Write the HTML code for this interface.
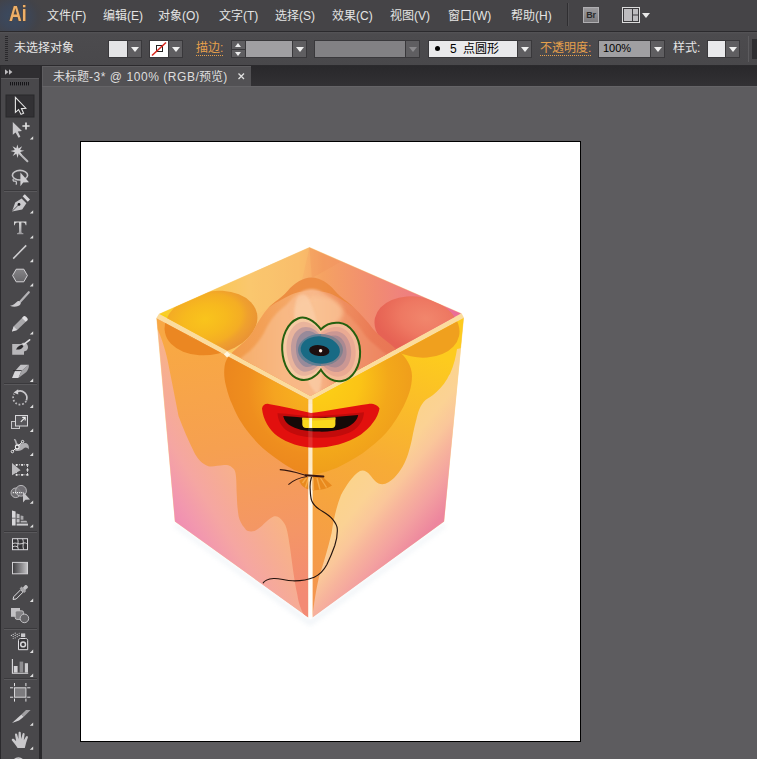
<!DOCTYPE html>
<html lang="zh-CN">
<head>
<meta charset="utf-8">
<title>未标题-3* @ 100% (RGB/预览)</title>
<style>
*{box-sizing:border-box;margin:0;padding:0}
html,body{width:757px;height:759px;overflow:hidden;background:#5d5c5f}
body{position:relative;font-family:"Liberation Sans",sans-serif;font-size:12px;color:#e2e2e2}
.abs{position:absolute}
/* menu bar */
#menubar{position:absolute;left:0;top:0;width:757px;height:31px;background:#454447}
#menubar .mi{position:absolute;top:8px;height:16px;line-height:16px;font-size:12px;color:#e4e4e4;white-space:nowrap;letter-spacing:0}
#ailogo{position:absolute;left:0;top:0;width:48px;height:31px;background:radial-gradient(ellipse 30px 26px at 14px 17px,#3a4b62 0%,#3d4657 45%,#424349 80%,#454447 100%)}
#ailogo span{position:absolute;left:8.5px;top:0.5px;font-size:22px;line-height:26px;font-weight:bold;color:#eeaf68;transform:scaleX(0.8);transform-origin:0 0;text-shadow:0 0 2px #6b4216}
/* control bar */
#ctrlbar{position:absolute;left:0;top:31px;width:757px;height:35px;background:linear-gradient(#555457 0,#4c4b4e 2px,#49484b 100%);border-top:1px solid #2b2a2d;border-bottom:1px solid #2b2a2d}
#ctrlbar .lbl{position:absolute;top:8px;height:16px;line-height:16px;font-size:12px;white-space:nowrap}
.or{color:#e6a04c;border-bottom:1px dotted #e6a04c}
.dd{position:absolute;top:8px;height:18px;width:15px;background:#5f5e61;border:1px solid #39383b}
.dd:after{content:"";position:absolute;left:3px;top:6px;border-left:4px solid transparent;border-right:4px solid transparent;border-top:5px solid #f0f0f0}
.dd.dis:after{border-top-color:#8a898c}
.fld{position:absolute;top:8px;height:18px;border:1px solid #39383b}
.spin{position:absolute;top:8px;width:15px;height:18px;background:#39383b}
.spin i{position:absolute;left:1px;width:13px;height:7.5px;background:#5f5e61}
.spin i.u{top:1px}.spin i.d{top:9.5px}
.spin i.u:after{content:"";position:absolute;left:3px;top:2px;border-left:3.5px solid transparent;border-right:3.5px solid transparent;border-bottom:4px solid #eee}
.spin i.d:after{content:"";position:absolute;left:3px;top:2px;border-left:3.5px solid transparent;border-right:3.5px solid transparent;border-top:4px solid #eee}
#cgrip{position:absolute;left:5px;top:4px;width:3px;height:25px;background:repeating-linear-gradient(to bottom,#2a292c 0,#2a292c 1px,transparent 1px,transparent 2px)}
/* tab bar */
#tabbar{position:absolute;left:42px;top:66px;width:715px;height:20px;background:linear-gradient(#29282b,#323134)}
#tab{position:absolute;left:0;top:0;width:209px;height:20px;background:#525154;border-top:1px solid #5e5d60;border-left:1px solid #5e5d60}
#tab b{font-weight:normal;letter-spacing:0.55px}
#tab span{position:absolute;left:10px;top:2px;line-height:16px;font-size:12px;color:#dedede;white-space:nowrap}
/* toolbar */
#toolbar{position:absolute;left:0;top:66px;width:42px;height:693px;background:#2a292c}
#tbhead{position:absolute;left:1px;top:0;width:39px;height:12px;background:#2f2e31}
#tbbody{position:absolute;left:1px;top:12px;width:38px;height:681px;background:#49484b;border-top:1px solid #5a595c}
/* canvas */
#canvas{position:absolute;left:42px;top:86px;width:715px;height:673px;background:#5d5c5f;border-top:1px solid #656467}
#artboard{position:absolute;left:80px;top:141px;width:501px;height:601px;background:#fff;border:1px solid #000}
</style>
</head>
<body>
<div id="canvas"></div>
<div id="artboard"></div>
<!--CUBE-->
<svg id="cube" class="abs" style="left:81px;top:142px" width="499" height="599" viewBox="81 142 499 599">
<defs>
<clipPath id="cT"><path d="M309.5 247.5L461 313.5L310.5 396L159.500 314Z"/></clipPath>
<clipPath id="cL"><path d="M156.800 318.500L308.300 399.500V617.500L175 521.500Z"/></clipPath>
<clipPath id="cR"><path d="M312.500 399.500L463.600 318L444 521.500L312.500 617.500Z"/></clipPath>
<linearGradient id="gTop" gradientUnits="userSpaceOnUse" x1="160" y1="314" x2="461" y2="314">
<stop offset="0" stop-color="#f8d008"/><stop offset="0.08" stop-color="#f9c834"/><stop offset="0.3" stop-color="#fac46e"/><stop offset="0.46" stop-color="#f9b86a"/><stop offset="0.54" stop-color="#f5a262"/><stop offset="0.72" stop-color="#f18b72"/><stop offset="0.88" stop-color="#ee7a86"/><stop offset="1" stop-color="#ea6a9a"/></linearGradient>
<linearGradient id="gLb" gradientUnits="userSpaceOnUse" x1="320" y1="440" x2="160" y2="540">
<stop offset="0.4" stop-color="#f8b486"/><stop offset="0.55" stop-color="#f6ac94"/><stop offset="0.68" stop-color="#f5a6a2"/><stop offset="0.8" stop-color="#f298ae"/><stop offset="0.94" stop-color="#ee86b6"/></linearGradient>
<linearGradient id="gLd" gradientUnits="userSpaceOnUse" x1="230" y1="340" x2="270" y2="600">
<stop offset="0" stop-color="#f8a844"/><stop offset="0.4" stop-color="#f6a050"/><stop offset="0.75" stop-color="#f49666"/><stop offset="1" stop-color="#f38a74"/></linearGradient>
<linearGradient id="gRb" gradientUnits="userSpaceOnUse" x1="345" y1="410" x2="455" y2="500">
<stop offset="0.3" stop-color="#fbd48a"/><stop offset="0.5" stop-color="#fbd294"/><stop offset="0.62" stop-color="#fac69a"/><stop offset="0.72" stop-color="#f7b49c"/><stop offset="0.85" stop-color="#f3a0a0"/><stop offset="1" stop-color="#ed869e"/></linearGradient>
<linearGradient id="gRd" gradientUnits="userSpaceOnUse" x1="420" y1="350" x2="330" y2="600">
<stop offset="0" stop-color="#fdcb1e"/><stop offset="0.45" stop-color="#f7ac36"/><stop offset="1" stop-color="#f4964e"/></linearGradient>
<linearGradient id="gHeadT" gradientUnits="userSpaceOnUse" x1="225" y1="0" x2="410" y2="0">
<stop offset="0" stop-color="#f19a46"/><stop offset="0.2" stop-color="#f3a056"/><stop offset="0.38" stop-color="#f5aa6c"/><stop offset="0.5" stop-color="#f5a872"/><stop offset="0.62" stop-color="#ef9060"/><stop offset="0.8" stop-color="#ea7a56"/><stop offset="1" stop-color="#e87254"/></linearGradient>
<linearGradient id="gHead2" gradientUnits="userSpaceOnUse" x1="236" y1="0" x2="396" y2="0">
<stop offset="0" stop-color="#f6ae6a"/><stop offset="0.3" stop-color="#f8b884"/><stop offset="0.5" stop-color="#f8b88a"/><stop offset="0.68" stop-color="#f1966a"/><stop offset="1" stop-color="#ec8060"/></linearGradient>
<filter id="blur2" x="-20%" y="-20%" width="140%" height="140%"><feGaussianBlur stdDeviation="2.2"/></filter>
<radialGradient id="gFL" gradientUnits="userSpaceOnUse" cx="314" cy="388" r="100">
<stop offset="0" stop-color="#f9b61e"/><stop offset="0.4" stop-color="#f5a420"/><stop offset="0.66" stop-color="#ef8e1e"/><stop offset="1" stop-color="#ea841e"/></radialGradient>
<radialGradient id="gFR" gradientUnits="userSpaceOnUse" cx="318" cy="380" r="104">
<stop offset="0" stop-color="#fdd216"/><stop offset="0.4" stop-color="#fbc416"/><stop offset="0.68" stop-color="#f3a81a"/><stop offset="1" stop-color="#ee9a1c"/></radialGradient>
<radialGradient id="gEarLT" gradientUnits="userSpaceOnUse" cx="206" cy="318" r="54" gradientTransform="translate(0 105) scale(1 .67)">
<stop offset="0" stop-color="#f9c41c"/><stop offset="0.4" stop-color="#f7b91e"/><stop offset="0.68" stop-color="#f4ad24"/><stop offset="0.8" stop-color="#efa02e"/><stop offset="1" stop-color="#ea9434"/></radialGradient>
<radialGradient id="gEarRT" gradientUnits="userSpaceOnUse" cx="424" cy="316" r="52" gradientTransform="translate(0 105) scale(1 .67)">
<stop offset="0" stop-color="#f1866c"/><stop offset="0.5" stop-color="#ee7862"/><stop offset="0.8" stop-color="#e96a58"/><stop offset="1" stop-color="#e66254"/></radialGradient>
<path id="balloon" d="M311.500 277.500C303 277.500 294.500 283 287.600 291C281.500 298 274.500 301.500 268.500 307.600C262.500 314.500 258 322 254.300 329C250.500 336 245.500 341 240 345.600C233 351.500 226 357 224.600 366C223.600 374 224.500 380 226 386C228 394 230 400 232 404C236 414 240 421 246.500 430C254 440 262 448 272.700 456C282 463 290 468 296 470.800C302 473.500 306 474.500 310.400 475.500C316 474.500 326 472 336.600 467.900C346 463.500 354 459 362.700 453.300C372 446 380 440 386 433C394 424 399 415 403.400 406.800C408 397 412 388 412 376C412 366 406 357 398 350.500C394 347.500 392.500 346.200 392 345.600C386.500 341 379.500 336 373 329C368 322 361 314.500 354 307.600C348 301.500 341 298 335 291C328.500 283 320 277.500 311.500 277.500Z"/>
<path id="head2" d="M311.500 289C305 289 298 293 292 299C287 305 282 308 277 313C271 319 267 326 264 333C260 340 255 346 250 351C245 355 240 358 236 363L310 406L396 363C392 358 387 355 382 351C377 346 369 341 364 334C360 327 352 319 346 313C341 308 336 305 331 299C325 293 318 289 311.500 289Z"/>
<path id="eyeO" d="M320.900 329.400C314 320 305 315.500 298 318.500C287 323 281.500 337 282.200 350C283 365 290 377 300 379.500C308 381.500 316 377 320.900 369.700C326 378 334 382.500 342 381C353 379 360.500 366 360.100 351.500C359.700 336 350 324 339 322.800C332 322 325.500 324.500 320.900 329.400Z"/>
<linearGradient id="gEdgeV" gradientUnits="userSpaceOnUse" x1="0" y1="399" x2="0" y2="618">
<stop offset="0" stop-color="#fff4dc" stop-opacity="0.55"/><stop offset="0.3" stop-color="#fff4e0" stop-opacity="0.6"/><stop offset="0.42" stop-color="#fffaf0" stop-opacity="0.95"/><stop offset="1" stop-color="#ffffff" stop-opacity="0.97"/></linearGradient>
<filter id="blur4" x="-20%" y="-20%" width="140%" height="140%"><feGaussianBlur stdDeviation="4"/></filter>
<filter id="blur3" x="-20%" y="-20%" width="140%" height="140%"><feGaussianBlur stdDeviation="2.5"/></filter>
<filter id="blur1"><feGaussianBlur stdDeviation="1.2"/></filter>
</defs>
<!-- soft shadow -->
<path d="M175 523L310 620L445 523L445 527L310 626L175 527Z" fill="#cfdbe6" opacity="0.32" filter="url(#blur3)"/>
<!-- silhouette / edge colour -->
<path d="M309.500 247L461.500 313.300L464 317.800L444.200 521.600L310.400 618.500L174.800 521.600L156.300 318.300L159 313.800Z" fill="#fbdc9e"/>
<!-- TOP FACE -->
<g clip-path="url(#cT)">
<rect x="150" y="240" width="320" height="170" fill="url(#gTop)"/>
<path d="M309.500 247.500L159.500 314L230 330L300 290Z" fill="#fbd070" opacity="0.25"/>
<path d="M309.500 247.500L312 278L340 262Z" fill="#f08a58" opacity="0.25"/>
<ellipse cx="211" cy="323" rx="47" ry="31.500" fill="url(#gEarLT)" transform="rotate(-12 211 323)"/>
<ellipse cx="417" cy="327" rx="43" ry="30" fill="url(#gEarRT)" transform="rotate(12 417 327)"/>
<use href="#balloon" fill="url(#gHeadT)"/>
<path d="M268.500 307.600C274.500 301.500 281.500 298 287.600 291C294.500 283 303 277.500 311.500 277.500C320 277.500 328.500 283 335 291C341 298 348 301.500 354 307.600C345 301 338 297 330 293.500C322 290 302 290 294 293.500C286 297 278 301 268.500 307.600Z" fill="#ea8636" opacity="0.75"/>
<use href="#head2" fill="url(#gHead2)" filter="url(#blur1)"/>
<ellipse cx="318" cy="312" rx="25" ry="16" fill="#fac496" opacity="0.75" filter="url(#blur2)"/>
<path d="M296 300C292 320 296 350 304 372C308 384 314 392 318 395C322 388 323 370 321 352C319 330 315 308 307 296C303 293 298 295 296 300Z" fill="#fbd2ae" opacity="0.6" filter="url(#blur1)"/>
</g>
<!-- LEFT FACE -->
<g clip-path="url(#cL)">
<rect x="150" y="310" width="165" height="315" fill="url(#gLb)"/>
<path d="M150 310H312V620L304.600 616.500C300 608 298 600 297.400 595C294 580 292 562 290 547.600C288 534 287 526 283 521.400C280 517 276 515.500 273.600 516.600C266 520 262 528 254.600 531C250 532 246 531 245 528.500C241 524 239.500 520 238.700 516.800C237 507 237 498 236.500 489.800C236.500 480 236 472 234.200 469.600C231 465.500 228 465 224 465C218 465.500 213 467 208.400 466.200C202 464 198 459 195 454C188 440 183 428 178.500 416C175.500 400 172.500 385 169.500 370C167.500 358 164 344 158 330L150 326Z" fill="url(#gLd)"/>
<ellipse cx="211" cy="323" rx="47" ry="31.500" fill="#eb8722" transform="rotate(-12 211 323)"/>
<ellipse cx="218" cy="318" rx="38" ry="25" fill="#f0942e" opacity="0.6" transform="rotate(-12 211 323)"/>
<use href="#balloon" fill="url(#gFL)"/>
</g>
<!-- RIGHT FACE -->
<g clip-path="url(#cR)">
<rect x="308" y="310" width="160" height="315" fill="url(#gRb)"/>
<path d="M308 310H470V346L457 349C456 356 454 365 450 374C448.500 376 448 377 447.400 378.500C443 386 438 391 433 395C429 398 426 399 423.600 402C419 408 418 413 416.500 419C414 428 413 434 411.800 440C409 452 407 458 404.400 463.300C400 472 394 480 385.400 483.800C378 486 374 480 370 475C367 471 363 469.500 360 471C352 476 346 486 341 495C336 508 333.500 520 331.600 532.900C328 548 324 562 319 577C316 590 314 604 312.600 615L308 620Z" fill="url(#gRd)"/>
<ellipse cx="417" cy="327" rx="43" ry="30" fill="#f0a01e" transform="rotate(12 417 327)"/>
<use href="#balloon" fill="url(#gFR)"/>
</g>
<path d="M227 351.500L230.500 354.800L227 357.500L223.800 354.200Z" fill="#fffbe8" opacity="0.9"/>
<!-- knot skirt -->
<path d="M306 476.500L299.200 480.800C301 486 305.500 489.200 311 490C318.500 490.800 327 489 332 485.500L322.500 476.800Z" fill="#e98a1e"/>
<path d="M302.500 483L306.500 477.500M305.500 487.500L308.500 478M313.500 490L313 478M320 489.500L317 478M326.500 487.500L320.500 478" stroke="#f5aa48" stroke-width="1.400" fill="none"/>
<!-- eye -->
<g>
<use href="#eyeO" fill="#f6cba4"/>
<clipPath id="cEye"><use href="#eyeO"/></clipPath>
<g clip-path="url(#cEye)">
<path d="M320.900 333C315 324 306 320 299.500 322.500C290 326.500 286 338 286.500 350C287.300 363 293 373 301 375.500C308 377 315 373 320.900 366C326 373.500 333 377.500 340.500 376.500C350 375 356 364 355.700 351.500C355.300 338.500 347.500 328 338 327C331.500 326.500 325.500 329 320.900 333Z" fill="#e9b49c"/>
<path d="M320.900 336C315.500 328.500 308 325.500 302 327.500C294 330.500 290.500 340 291 350C291.600 361 296.500 369.500 303 371.500C309 372.500 315.500 369 320.900 363C326 369.500 332 372.500 338.500 372C346.500 370.500 351.500 362 351.200 351.500C350.800 340.500 344.500 332 337 331.200C331 330.800 325.500 332.500 320.900 336Z" fill="#c29c9c"/>
<path d="M320.900 338.500C316 332.500 310 330 305 331.500C298.500 334 295.500 341.500 296 350C296.500 359 300.500 365.500 306 367C311 367.500 316.500 365 320.900 360.500C325.500 365.500 331 368 336 367.500C343 366 346.800 359.500 346.600 351.500C346.200 342.500 341.500 336.500 335.500 335.600C330 335.200 325 336.500 320.900 338.500Z" fill="#978a9a"/>
<ellipse cx="320.500" cy="350" rx="22.500" ry="16" fill="#5e7e94"/>
<path d="M321 318H365V385H321Z" fill="#ee8a78" opacity="0.22"/>
</g>
<ellipse cx="320.300" cy="350" rx="19.700" ry="13.600" fill="#186a84" transform="rotate(6 320.300 350)"/>
<ellipse cx="319.300" cy="350.600" rx="10.200" ry="5.400" fill="#1d0f10" transform="rotate(6 319.300 350.600)"/>
<circle cx="320.600" cy="350.800" r="1.700" fill="#ffeee4"/>
<use href="#eyeO" fill="none" stroke="#25600f" stroke-width="2"/>
</g>
<!-- white edges over art -->
<path d="M308.300 399.500H312.500V617.500L310.400 619.500L308.300 617.500Z" fill="url(#gEdgeV)"/>
<!-- mouth -->
<path d="M262 408.500C262.500 405.500 265 403.500 268.500 403.900C283 406 298 410 311 413.100C326 411 350 406.500 368.400 403.900C373 403.300 378 405 379.500 408.500C378 418 370 428 361 434.400C348 443 330 447.700 314.700 447.700C300 447.500 288 443 277.700 436.200C269 430 263 419 262 408.500Z" fill="#e2100e"/>
<path d="M277.500 413.200C289 413.800 301 415.500 311 416.200C326 415.800 346 414 364 412.200C363.500 422 357 429.500 348.500 433C339 436.800 327.500 438 318 437.700C306.500 437.600 295.500 435.500 288 431.200C281.500 427.200 277.800 420.500 277.500 413.200Z" fill="#c20b0b"/>
<path d="M283.300 415.900C292 416.300 302 417.700 311 418.200C326 418 343 416.400 358.200 415C357 421 352 425.500 345 428C336 431 327 431.900 318.400 431.600C308 431.500 299 430 292 426.500C287 424 284 420 283.300 415.900Z" fill="#150a08"/>
<path d="M302.300 417.800C312 418.400 325 418.200 335.400 417.400V424.500C335.400 426.500 334 427.900 332 427.900H306C303.800 427.900 302.300 426.500 302.300 424.500Z" fill="#fad91c"/>
<path d="M302.300 417.800C312 418.400 325 418.200 335.400 417.400V419.600C325 420.600 312 420.600 302.300 419.900Z" fill="#f2c21a"/>
<path d="M308.300 404H312.500V448H308.300Z" fill="#ffffff" opacity="0.13"/>
<path d="M309.200 418.100H312V427.900H309.200Z" fill="#fffdf0" opacity="0.85"/>
<!-- knot + string -->
<path d="M305.600 475.200L323.400 476.500" stroke="#3a1810" stroke-width="2" stroke-linecap="round"/>
<path d="M306 475.500C298 473 290 470 279.800 469.600M307 476.500C300 477.500 293 480.500 288.400 484.600" fill="none" stroke="#34160e" stroke-width="1.100"/>
<path d="M311.500 477C310 482 309.800 486 310.200 489.600C310.400 494 310.500 497 311.500 500.200C313 504.500 316 507 319.400 509.400C324 512.500 329 514.500 332.700 519.400C336 523.500 337.500 527 337.300 529.700C337.500 535 336.500 540 334.800 545.500C332.500 552 330 558 326.900 564.500C324 570 320 574.500 314.200 577.200C307 580.200 300 581 292.700 580.800C285 580.500 279 578 273.600 578.500C268 579 264.500 580 263 583.200" fill="none" stroke="#24140f" stroke-width="1.150"/>
</svg>
<!--/CUBE-->

<div id="menubar">
  <div id="ailogo"><span>Ai</span></div>
  <div class="mi" style="left:47px">文件(F)</div>
  <div class="mi" style="left:103px">编辑(E)</div>
  <div class="mi" style="left:158px">对象(O)</div>
  <div class="mi" style="left:219px">文字(T)</div>
  <div class="mi" style="left:275px">选择(S)</div>
  <div class="mi" style="left:332px">效果(C)</div>
  <div class="mi" style="left:390px">视图(V)</div>
  <div class="mi" style="left:448px">窗口(W)</div>
  <div class="mi" style="left:511px">帮助(H)</div>
  <div class="abs" style="left:567px;top:3px;width:1px;height:23px;background:#2f2e31"></div>
  <div class="abs" style="left:568px;top:3px;width:1px;height:23px;background:#515053"></div>
  <div class="abs" style="left:583px;top:7px;width:16px;height:16px;background:linear-gradient(#9c9b9e,#7a797c);border:1px solid #b0afb2;font-size:9px;line-height:14px;font-weight:bold;color:#2a2a2a;text-align:center;letter-spacing:-0.3px">Br</div>
  <svg class="abs" style="left:622px;top:7px" width="30" height="17" viewBox="0 0 30 17"><rect x="0.5" y="0.5" width="17" height="15" fill="#3a393c" stroke="#dcdcdc"/><rect x="2" y="2" width="8" height="12" fill="#bdbcbf"/><rect x="11" y="2" width="5" height="5.5" fill="#bdbcbf"/><rect x="11" y="8.5" width="5" height="5.5" fill="#bdbcbf"/><path d="M20 6h8l-4 5z" fill="#e8e8e8"/></svg>
</div>

<div id="ctrlbar">
  <div class="lbl" style="left:14px;color:#e6e6e6">未选择对象</div>
  <div class="lbl or" style="left:196px">描边:</div>
  <div class="lbl or" style="left:540px">不透明度:</div>
  <div class="lbl" style="left:673px;color:#e6e6e6">样式:</div>
  <div id="cgrip"></div>
  <div class="fld" style="left:108px;width:20px;background:#e4e4e6"></div>
  <div class="dd" style="left:127px"></div>
  <div class="fld" style="left:149px;width:20px;background:#fff">
    <svg width="18" height="16" viewBox="0 0 18 16" style="position:absolute;left:0;top:0"><rect x="6.5" y="4.5" width="6" height="6" fill="none" stroke="#222" stroke-width="1"/><line x1="2" y1="14.5" x2="16" y2="1.5" stroke="#d8281e" stroke-width="1.6"/></svg>
  </div>
  <div class="dd" style="left:168px"></div>
  <div class="spin" style="left:231px"><i class="u"></i><i class="d"></i></div>
  <div class="fld" style="left:245px;width:48px;background:#a09fa2"></div>
  <div class="dd" style="left:292px"></div>
  <div class="fld" style="left:314px;width:92px;background:#828184"></div>
  <div class="dd dis" style="left:405px"></div>
  <div class="fld" style="left:428px;width:90px;background:#e9e9eb;color:#000"><span style="position:absolute;left:6px;top:5px;width:5px;height:5px;border-radius:3px;background:#000"></span><span style="position:absolute;left:21px;top:0;line-height:16px;font-size:12px;white-space:nowrap">5&nbsp; 点圆形</span></div>
  <div class="dd" style="left:517px"></div>
  <div class="fld" style="left:598px;width:53px;background:#a09fa2;color:#000"><span style="position:absolute;left:4px;top:0;line-height:14px;font-size:11px">100%</span></div>
  <div class="dd" style="left:650px"></div>
  <div class="fld" style="left:707px;width:19px;background:#e9e9eb"></div>
  <div class="dd" style="left:725px"></div>
  <div class="abs" style="left:748px;top:4px;width:1px;height:26px;background:#5c5b5e"></div>
  <div class="abs" style="left:752px;top:7px;width:5px;height:20px;background:#2f2e31"></div>
</div>

<div id="tabbar">
  <div id="tab"><span>未标题<b>-3* @ 100% (RGB/</b>预览<b>)</b></span><svg class="abs" style="left:194px;top:5px" width="9" height="9" viewBox="0 0 9 9"><path d="M1.5 1.5l5.5 5.500M7 1.500l-5.500 5.500" stroke="#e0e0e0" stroke-width="1.300"/></svg></div>
</div>

<div id="toolbar">
  <div id="tbhead"></div>
  <div id="tbbody"></div>
</div>
<svg id="tbsvg" class="abs" style="left:0;top:66px" width="42" height="693" viewBox="0 66 42 693">
<defs>
<linearGradient id="gI" x1="0" y1="0" x2="0" y2="1"><stop offset="0" stop-color="#dcdcdc"/><stop offset="1" stop-color="#9a999c"/></linearGradient>
<linearGradient id="gH" x1="0" y1="0" x2="0" y2="1"><stop offset="0" stop-color="#858487"/><stop offset="1" stop-color="#68676a"/></linearGradient>
<linearGradient id="gG" x1="0" y1="0" x2="1" y2="0"><stop offset="0" stop-color="#3c3b3e"/><stop offset="1" stop-color="#c4c3c6"/></linearGradient>
<path id="fly" d="M0 3.4L3.4 0V3.4z" fill="#dedede"/>
</defs>
<!-- header arrows -->
<path d="M5 69.2l3.4 2.8L5 74.8zM9 69.2l3.4 2.8L9 74.8z" fill="#bdbcbf"/>
<!-- grip -->
<g fill="#161518"><rect x="10" y="82" width="1" height="3.4"/><rect x="12" y="82" width="1" height="3.4"/><rect x="14" y="82" width="1" height="3.4"/><rect x="16" y="82" width="1" height="3.4"/><rect x="18" y="82" width="1" height="3.4"/><rect x="20" y="82" width="1" height="3.4"/><rect x="22" y="82" width="1" height="3.4"/><rect x="24" y="82" width="1" height="3.4"/><rect x="26" y="82" width="1" height="3.4"/><rect x="28" y="82" width="1" height="3.4"/></g>
<!-- separators -->
<g stroke="#3a393c" stroke-width="1"><path d="M4 190.5H37M4 383.5H37M4 531.5H37M4 628.5H37M4 678.5H37"/></g>
<g stroke="#59585b" stroke-width="1"><path d="M4 191.5H37M4 384.5H37M4 532.5H37M4 629.5H37M4 679.5H37"/></g>
<!-- 1 selection -->
<rect x="6" y="95" width="28" height="22" fill="#323134" stroke="#29282b" stroke-width="1"/>
<path d="M15.4 97.4V112.4L18.6 109.6L21 114.4L23.6 113.2L21.4 108.6L25.8 108.2Z" fill="#2a292c" stroke="#e6e6e6" stroke-width="1.1" stroke-linejoin="miter"/>
<!-- 2 direct selection -->
<path d="M12.8 122V134.8L15.6 132.4L18.6 137.8L20.4 136.8L17.8 131.6L22 131Z" fill="#c9c8cb"/>
<path d="M26 122.4V129.6M22.4 126H29.6" stroke="#e0e0e0" stroke-width="1.7"/>
<use href="#fly" x="29.8" y="136.2"/>
<!-- 3 magic wand -->
<path d="M20 154L27.4 161.2" stroke="#bab9bc" stroke-width="2" stroke-linecap="round"/>
<path d="M17.4 144.4l1.1 4.2 3.6-2.3-2 3.6 4.3.9-4.2 1.2 2.2 3.6-3.7-2-1.1 4.4-1.2-4.3-3.7 2.2 2.2-3.7-4.4-1.1 4.3-1.2-2.3-3.7 3.8 2.1z" fill="#d2d1d4"/>
<!-- 4 lasso -->
<ellipse cx="20" cy="175.2" rx="7.6" ry="4.8" fill="none" stroke="#c4c3c6" stroke-width="1.6"/>
<path d="M13.6 178.6c-1.2 1.2-.4 2.8 1.2 2.6 1.6-.2 2.2 1.4 1.2 3.4" fill="none" stroke="#c4c3c6" stroke-width="1.3"/>
<path d="M20.4 172.6V186.2L23.2 182.6L29 182.2Z" fill="#cfced1"/>
<!-- 5 pen -->
<path d="M12 211.4L15.2 202.6L21.6 198.4L26.4 203.2L22.2 209.4Z" fill="#c9c8cb"/>
<path d="M22.6 196.2L24.8 194.2L30 199.6L27.8 201.8Z" fill="#d6d5d8"/>
<path d="M12 211.4L18.6 204.8" stroke="#4a494c" stroke-width="0.9"/>
<circle cx="19" cy="204.4" r="1.4" fill="#1c1b1e"/>
<use href="#fly" x="29.8" y="210.2"/>
<!-- 6 type -->
<path d="M14 221.4H26.4V225.2H25.6C25.3 223.4 24.8 222.6 23 222.6H21.4V231.6C21.4 232.9 21.8 233.2 23.4 233.3V234.2H17V233.3C18.6 233.2 19 232.9 19 231.6V222.6H17.4C15.6 222.6 15.1 223.4 14.8 225.2H14Z" fill="url(#gI)"/>
<use href="#fly" x="29.8" y="235.2"/>
<!-- 7 line -->
<path d="M13.2 258.6L26.2 245.4" stroke="#d0cfd2" stroke-width="1.5"/>
<use href="#fly" x="29.8" y="258.8"/>
<!-- 8 hexagon -->
<path d="M12.6 275.5L16.2 269.2H23.8L27.4 275.5L23.8 281.8H16.2Z" fill="url(#gH)" stroke="#d4d3d6" stroke-width="1"/>
<use href="#fly" x="29.8" y="283"/>
<!-- 9 brush -->
<path d="M28.8 292.2L20.4 301.6" stroke="#b4b3b6" stroke-width="2.2" stroke-linecap="round"/>
<path d="M10 305.8C13.4 305.6 15 303.4 17.6 301.2C19.4 300.4 21.4 302 20.6 304C19 306.8 13.600000000000001 307.4 10 305.8Z" fill="#cccbce"/>
<!-- 10 pencil -->
<path d="M12 331.6L13.6 326.4L23.8 316.2L27.6 320L17.2 330Z" fill="#a9a8ab"/>
<path d="M22 318L23.8 316.2C25 315 28.8 318.800 27.6 320L25.8 321.8Z" fill="#e0dfe2"/>
<path d="M12 331.6L13.6 326.4L17.2 330Z" fill="#dad9dc"/>
<use href="#fly" x="29.8" y="331.2"/>
<!-- 11 blob brush -->
<path d="M12.200 344H21.200C23 341.600 28 342.600 28 347C28 350.400 25.600 351.200 24 351.400V354.800H12.200Z" fill="#b8b7ba"/>
<path d="M16 349.400C17.400 346.400 20 345 23.600 344.400C23.800 347.400 20.800 350.200 16 349.400Z" fill="#2c2b2e"/>
<path d="M23.200 344.800L29.600 339.800" stroke="#dddcdf" stroke-width="1.700" stroke-linecap="round"/>
<!-- 12 eraser -->
<path d="M12 378L15 371H21.400L18.400 378Z" fill="#d8d7da"/>
<path d="M15 371L20.600 364.800H28.800L21.400 371Z" fill="#c2c1c4"/>
<path d="M21.400 371L28.800 364.800C29.400 366 28.400 369.600 26.400 372L18.400 378Z" fill="#a3a2a5"/>
<path d="M13.200 370.600H21.600" stroke="#2c2b2e" stroke-width="0.900"/>
<use href="#fly" x="29.8" y="378.600"/>
<!-- 13 rotate -->
<path d="M17.200 391.400A7 7 0 0 1 26.400 400.400" fill="none" stroke="#c9c8cb" stroke-width="1.700"/>
<path d="M26.200 401A7 7 0 1 1 14.200 393.800" fill="none" stroke="#b9b8bb" stroke-width="1.700" stroke-dasharray="1.800 1.700"/>
<path d="M13.600 392.600L18.200 389.200V394.600Z" fill="#d2d1d4"/>
<use href="#fly" x="29.8" y="404.600"/>
<!-- 14 scale -->
<rect x="11.500" y="421.500" width="8" height="7" fill="#57565a" stroke="#c4c3c6"/>
<rect x="15.500" y="415.500" width="12" height="10.500" fill="#57565a" stroke="#d8d7da"/>
<path d="M20.800 421.800L25 417.600M22.200 417.400H25.200V420.400" fill="none" stroke="#eeeeee" stroke-width="1.100"/>
<use href="#fly" x="29.8" y="428.600"/>
<!-- 15 width -->
<path d="M13.800 439.200C15.600 438.400 16.600 440.400 17 443C19 446 23 441.600 27 443.400C29 444.800 29.200 447.600 28.600 449.400C27.400 447.400 25.400 446.800 23.600 448.600C21.600 451 17.400 451.800 14.600 450.200C17.200 447.400 15.600 442.600 13.800 439.200Z" fill="#aeadb0"/>
<path d="M12.600 451.400L22.400 441.800" stroke="#f0f0f0" stroke-width="1"/>
<circle cx="17.200" cy="447" r="1.900" fill="#49484b" stroke="#f2f2f2" stroke-width="1.100"/>
<circle cx="12.400" cy="451.600" r="1.200" fill="#49484b" stroke="#f2f2f2" stroke-width="0.900"/>
<circle cx="22.600" cy="441.600" r="1.200" fill="#49484b" stroke="#f2f2f2" stroke-width="0.900"/>
<use href="#fly" x="29.8" y="452.600"/>
<!-- 16 free transform -->
<rect x="16.500" y="464.800" width="11" height="10" fill="none" stroke="#d6d5d8" stroke-width="1" stroke-dasharray="1.200 1.200"/>
<g fill="#e4e4e4"><rect x="15.700" y="464" width="1.800" height="1.800"/><rect x="21.200" y="464" width="1.800" height="1.800"/><rect x="26.600" y="464" width="1.800" height="1.800"/><rect x="26.600" y="469" width="1.800" height="1.800"/><rect x="15.700" y="474" width="1.800" height="1.800"/><rect x="21.200" y="474" width="1.800" height="1.800"/><rect x="26.600" y="474" width="1.800" height="1.800"/></g>
<path d="M12 463V475.200L20.600 470.200Z" fill="#bcbbbe"/>
<!-- 17 shape builder -->
<circle cx="15.800" cy="492.800" r="4.800" fill="#6c6b6e" stroke="#c2c1c4" stroke-width="0.900"/>
<circle cx="21" cy="490.800" r="5.400" fill="#77767a" fill-opacity="0.850" stroke="#c2c1c4" stroke-width="0.900"/>
<path d="M12.800 492.600H22.400" stroke="#f4f4f4" stroke-width="1.100" stroke-dasharray="1.100 1"/>
<path d="M23 491.800V502.400L25.400 499.800L30 499.400Z" fill="#c6c5c8"/>
<use href="#fly" x="29.800" y="500.400"/>
<!-- 18 perspective grid -->
<path d="M12 510.600L15.600 511.600V525.600H12Z" fill="#d8d7da"/>
<path d="M16.600 513.400L19.600 514.200V522.600H16.600Z" fill="#bebdc0"/>
<path d="M20.600 515.400L23.400 516V519.800H20.600Z" fill="#a8a7aa"/>
<path d="M16.600 523.600H28V525.600H16.600Z" fill="#cccbce"/>
<path d="M20.600 520.800H26.400L27.400 522.600H20.600Z" fill="#b2b1b4"/>
<path d="M12 518.200H15.600M16.600 518.600H19.600" stroke="#49484b" stroke-width="0.700"/>
<use href="#fly" x="29.800" y="524.200"/>
<!-- 19 mesh -->
<rect x="12.500" y="538.700" width="15" height="11" fill="#353437" stroke="#d8d7da"/>
<path d="M12.500 543.600C16 541.800 19 545 22 543.600S26 543 27.500 544.400M17.400 538.700C19.400 541.600 16.400 545.600 18.400 549.700M22.600 538.700C24.400 542 22 546 23.600 549.700M12.500 547C15 545.400 17 546.400 18 547.400" fill="none" stroke="#dcdbde" stroke-width="0.900"/>
<!-- 20 gradient -->
<rect x="12.500" y="562.400" width="15" height="11.400" fill="url(#gG)" stroke="#d2d1d4"/>
<!-- 21 eyedropper -->
<path d="M13 599.400L13.800 596.600L20.600 589.800L23 592.200L16.200 599Z" fill="#49484b" stroke="#e0dfe2" stroke-width="1"/>
<path d="M19.600 588.400L21.600 586.400L26.200 591L24.200 593Z" fill="#a6a5a8"/>
<path d="M22.800 587.800L25 585.200C26.200 584 28.800 586.600 27.600 588L25 590.200Z" fill="#c2c1c4"/>
<use href="#fly" x="29.800" y="598.600"/>
<!-- 22 blend -->
<rect x="11" y="608" width="9" height="8.800" fill="#c2c1c4"/>
<rect x="15.200" y="610.800" width="8.400" height="8.600" rx="1.800" fill="#828184" stroke="#c9c8cb" stroke-width="0.900"/>
<circle cx="24.400" cy="618.400" r="4.300" fill="#646366" stroke="#cccbce" stroke-width="0.900"/>
<!-- 23 symbol sprayer -->
<path d="M18.500 640.600C18.500 639 19.400 638.500 20.600 638.500H25.600C26.800 638.500 27.700 639 27.700 640.600V649.700H18.500Z" fill="#39383b" stroke="#e0dfe2"/>
<rect x="21" y="633.400" width="4.200" height="3.600" fill="#c9c8cb"/>
<circle cx="23.100" cy="644.400" r="2.400" fill="#39383b" stroke="#d8d7da" stroke-width="1.500"/>
<g fill="#d4d3d6"><circle cx="19.200" cy="635.400" r="0.600"/><circle cx="17.200" cy="634.400" r="0.600"/><circle cx="17.200" cy="636.600" r="0.600"/><circle cx="15.200" cy="635.400" r="0.600"/><circle cx="13.200" cy="634.400" r="0.600"/><circle cx="13.200" cy="636.600" r="0.600"/><circle cx="11.400" cy="635.400" r="0.600"/><circle cx="15.200" cy="637.800" r="0.600"/><circle cx="15.200" cy="633.200" r="0.600"/><circle cx="19.200" cy="633.200" r="0.500"/><circle cx="13.200" cy="638.600" r="0.500"/></g>
<use href="#fly" x="29.800" y="649.600"/>
<!-- 24 column graph -->
<path d="M12.400 659V673.200H28.200" fill="none" stroke="#dddcdf" stroke-width="1.100"/>
<rect x="13.800" y="666" width="3.800" height="6.600" fill="#d4d3d6"/>
<rect x="19.600" y="661.600" width="3.600" height="11" fill="#8f8e91"/>
<rect x="24.800" y="663.200" width="3.200" height="9.400" fill="#cccbce"/>
<use href="#fly" x="29.800" y="673.600"/>
<!-- 25 artboard -->
<rect x="14.500" y="687.800" width="11.400" height="9.400" fill="#7c7b7e" stroke="#d6d5d8"/>
<path d="M10 687.800H13.200M27.200 687.800H30.400M10 697.200H13.200M27.200 697.200H30.400M14.500 683V686.200M25.900 683V686.200M14.500 698.600V701.600M25.900 698.600V701.600" stroke="#e2e1e4" stroke-width="1"/>
<!-- 26 slice -->
<path d="M12 723L21.400 714.600L23.800 716.800L19 720.400Z" fill="#d2d1d4"/>
<path d="M21.400 714.600L26 710H30.600L23.800 716.800Z" fill="#a2a1a4"/>
<use href="#fly" x="29.800" y="722.400"/>
<!-- 27 hand -->
<path d="M17.600 748C15.600 744.600 13.600 742.600 11.800 740.200C11.400 738.800 13 738.200 14.200 739.200L16.200 741.200L15 734.800C14.800 733.200 16.800 732.800 17.200 734.400L18.400 739L18.600 732.800C18.600 731.400 20.600 731.400 20.800 732.800L21.200 739L22.600 733.800C23 732.400 24.800 732.800 24.600 734.400L23.800 740.200L26 736.600C26.800 735.400 28.400 736.200 27.800 737.800C26.600 741 25.600 744.800 24.800 748Z" fill="#c9c8cb"/>
<use href="#fly" x="29.800" y="746.400"/>
<!-- 28 zoom (cut off) -->
<circle cx="18.400" cy="764" r="6" fill="#6a696c" stroke="#c9c8cb" stroke-width="1.400"/>
</svg>

</body>
</html>
